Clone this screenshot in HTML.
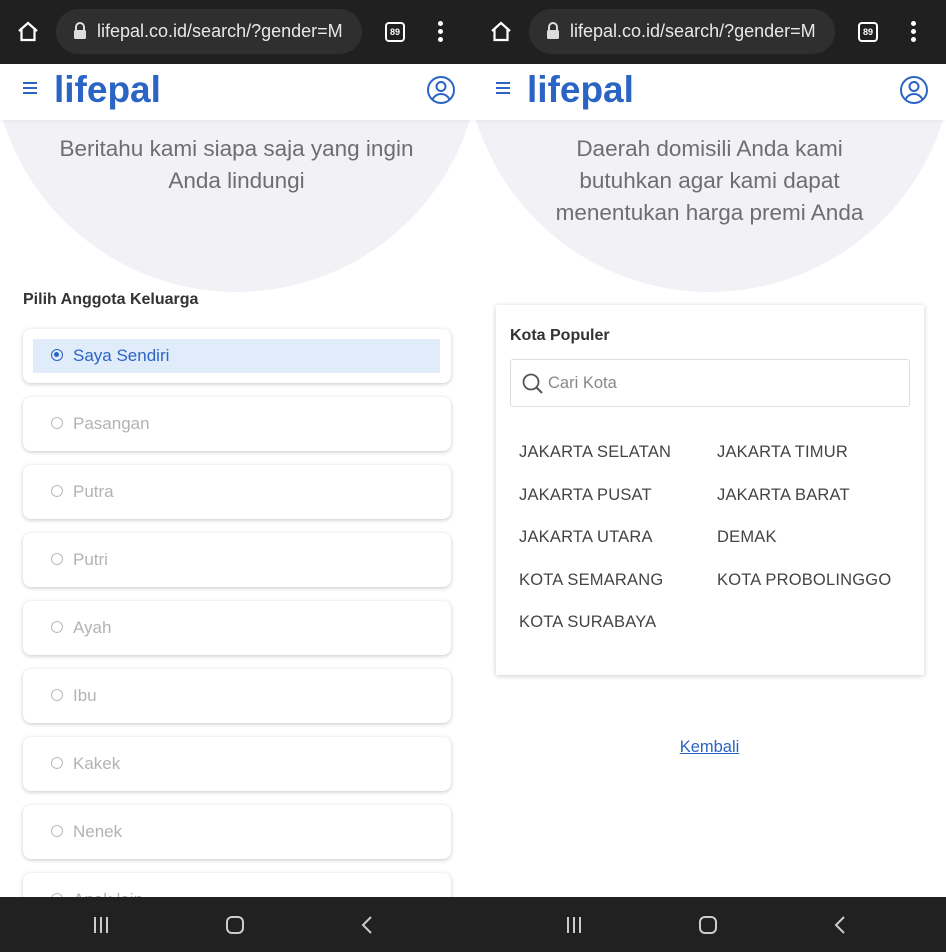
<!DOCTYPE html>
<html><head><meta charset="utf-8"><style>
*{margin:0;padding:0;box-sizing:border-box}
body{width:946px;height:952px;overflow:hidden;background:#fff;font-family:"Liberation Sans",sans-serif;position:relative}
.p{position:absolute;top:0;width:473px;height:952px;overflow:hidden;background:#fff}
.sb{position:absolute;top:0;left:0;width:473px;height:64px;background:#202020}
.url{position:absolute;left:56px;top:9px;width:306px;height:45px;border-radius:23px;background:#2f2f2f;color:#e8e8e8;font-size:18px;line-height:45px;padding-left:41px;white-space:nowrap;overflow:hidden}
.hdr{position:absolute;top:64px;left:0;width:473px;height:56px;background:#fff;z-index:2;box-shadow:0 2px 3px rgba(0,0,0,.04)}
.logo{position:absolute;left:54px;top:5px;font-size:37px;color:#2a64c5;font-weight:bold;letter-spacing:0px}
.circ{position:absolute;left:-8px;top:-197px;width:489px;height:489px;border-radius:50%;background:#f2f2f6}
.t{position:absolute;left:0;width:473px;text-align:center;color:#6e6e6e;font-size:22.5px;line-height:32px;z-index:1}
.card{position:absolute;left:23px;width:428px;height:54px;border-radius:8px;background:#fff;box-shadow:0 1px 4px rgba(0,0,0,.22);color:#b3b3b3;font-size:17px}
.card span{position:absolute;left:50px;top:17px}
.card i{position:absolute;left:28px;top:20px;width:12px;height:12px;border:1.5px solid #bbb;border-radius:50%}
.nav{position:absolute;left:0;top:897px;width:473px;height:55px;background:#212121;z-index:3}
.c{position:absolute;font-size:16.5px;color:#444;letter-spacing:.2px}
</style></head><body>

<div class="p" style="left:0">
<div class="circ"></div>
<div class="sb">
<svg style="position:absolute;left:16px;top:20px" width="24" height="24" viewBox="0 0 24 24"><path d="M3 11L12 3l9 8M5.5 9v11h13V9" fill="none" stroke="#fff" stroke-width="2.2"/></svg>
<div class="url">lifepal.co.id/search/?gender=M</div>
<svg style="position:absolute;left:72px;top:22px" width="16" height="18" viewBox="0 0 16 18"><path d="M4 8V5a4 4 0 018 0v3" fill="none" stroke="#ddd" stroke-width="2"/><rect x="2" y="8" width="12" height="9" rx="1.5" fill="#ddd"/></svg>
<div style="position:absolute;left:385px;top:22px;width:20px;height:20px;border:2px solid #fff;border-radius:4px;color:#fff;font-size:9px;font-weight:bold;text-align:center;line-height:16px">89</div>
<div style="position:absolute;left:438px;top:21px;width:5px;height:5px;border-radius:50%;background:#fff;box-shadow:0 8px #fff,0 16px #fff"></div>
</div>
<div class="hdr">
<div style="position:absolute;left:23px;top:18px;width:14px;height:1.5px;background:#2a64c5;box-shadow:0 5px #2a64c5,0 10px #2a64c5"></div>
<div class="logo">lifepal</div>
<svg style="position:absolute;left:426px;top:11px" width="30" height="30" viewBox="0 0 30 30"><circle cx="15" cy="15" r="13" fill="none" stroke="#2a64c5" stroke-width="2"/><circle cx="15" cy="11.5" r="4.5" fill="none" stroke="#2a64c5" stroke-width="2"/><path d="M6.5 24.5c2-4 5-5.5 8.5-5.5s6.5 1.5 8.5 5.5" fill="none" stroke="#2a64c5" stroke-width="2"/></svg>
</div>
<div class="t" style="top:133px">Beritahu kami siapa saja yang ingin<br>Anda lindungi</div>
<div style="position:absolute;left:23px;top:291px;font-size:16px;font-weight:bold;color:#333">Pilih Anggota Keluarga</div>
<div class="card" style="top:329px"><div style="position:absolute;left:10px;top:10px;width:407px;height:34px;background:#e1ecfb"></div><i style="border-color:#2a64c5;z-index:1"><b style="position:absolute;left:2px;top:2px;width:5px;height:5px;border-radius:50%;background:#2a64c5"></b></i><span style="color:#2a64c5;z-index:1">Saya Sendiri</span></div>
<div class="card" style="top:397px"><i></i><span>Pasangan</span></div>
<div class="card" style="top:465px"><i></i><span>Putra</span></div>
<div class="card" style="top:533px"><i></i><span>Putri</span></div>
<div class="card" style="top:601px"><i></i><span>Ayah</span></div>
<div class="card" style="top:669px"><i></i><span>Ibu</span></div>
<div class="card" style="top:737px"><i></i><span>Kakek</span></div>
<div class="card" style="top:805px"><i></i><span>Nenek</span></div>
<div class="card" style="top:873px"><i></i><span>Anak lain</span></div>
<div class="nav">
<div style="position:absolute;left:94px;top:20px;width:2px;height:16px;background:#ccc;box-shadow:6px 0 #ccc,12px 0 #ccc"></div>
<div style="position:absolute;left:226px;top:19px;width:18px;height:18px;border:2px solid #ccc;border-radius:6px"></div>
<svg style="position:absolute;left:360px;top:18px" width="14" height="20"><path d="M11 2L3 10l8 8" fill="none" stroke="#ccc" stroke-width="2"/></svg>
</div>
</div>

<div class="p" style="left:473px">
<div class="circ"></div>
<div class="sb">
<svg style="position:absolute;left:16px;top:20px" width="24" height="24" viewBox="0 0 24 24"><path d="M3 11L12 3l9 8M5.5 9v11h13V9" fill="none" stroke="#fff" stroke-width="2.2"/></svg>
<div class="url">lifepal.co.id/search/?gender=M</div>
<svg style="position:absolute;left:72px;top:22px" width="16" height="18" viewBox="0 0 16 18"><path d="M4 8V5a4 4 0 018 0v3" fill="none" stroke="#ddd" stroke-width="2"/><rect x="2" y="8" width="12" height="9" rx="1.5" fill="#ddd"/></svg>
<div style="position:absolute;left:385px;top:22px;width:20px;height:20px;border:2px solid #fff;border-radius:4px;color:#fff;font-size:9px;font-weight:bold;text-align:center;line-height:16px">89</div>
<div style="position:absolute;left:438px;top:21px;width:5px;height:5px;border-radius:50%;background:#fff;box-shadow:0 8px #fff,0 16px #fff"></div>
</div>
<div class="hdr">
<div style="position:absolute;left:23px;top:18px;width:14px;height:1.5px;background:#2a64c5;box-shadow:0 5px #2a64c5,0 10px #2a64c5"></div>
<div class="logo">lifepal</div>
<svg style="position:absolute;left:426px;top:11px" width="30" height="30" viewBox="0 0 30 30"><circle cx="15" cy="15" r="13" fill="none" stroke="#2a64c5" stroke-width="2"/><circle cx="15" cy="11.5" r="4.5" fill="none" stroke="#2a64c5" stroke-width="2"/><path d="M6.5 24.5c2-4 5-5.5 8.5-5.5s6.5 1.5 8.5 5.5" fill="none" stroke="#2a64c5" stroke-width="2"/></svg>
</div>
<div class="t" style="top:133px">Daerah domisili Anda kami<br>butuhkan agar kami dapat<br>menentukan harga premi Anda</div>
<div style="position:absolute;left:23px;top:305px;width:428px;height:370px;background:#fff;box-shadow:0 1px 5px rgba(0,0,0,.2)">
<div style="position:absolute;left:14px;top:22px;font-size:16px;font-weight:bold;color:#333">Kota Populer</div>
<div style="position:absolute;left:14px;top:54px;width:400px;height:48px;border:1px solid #ddd;border-radius:3px">
<svg style="position:absolute;left:10px;top:12px" width="24" height="24" viewBox="0 0 24 24"><circle cx="10" cy="10" r="7.5" fill="none" stroke="#555" stroke-width="1.8"/><path d="M15.5 15.5L21 21" stroke="#555" stroke-width="2"/></svg>
<div style="position:absolute;left:37px;top:14px;font-size:16.5px;color:#888">Cari Kota</div>
</div>
</div>
<div class="c" style="left:46px;top:443px">JAKARTA SELATAN</div>
<div class="c" style="left:244px;top:443px">JAKARTA TIMUR</div>
<div class="c" style="left:46px;top:486px">JAKARTA PUSAT</div>
<div class="c" style="left:244px;top:486px">JAKARTA BARAT</div>
<div class="c" style="left:46px;top:528px">JAKARTA UTARA</div>
<div class="c" style="left:244px;top:528px">DEMAK</div>
<div class="c" style="left:46px;top:571px">KOTA SEMARANG</div>
<div class="c" style="left:244px;top:571px">KOTA PROBOLINGGO</div>
<div class="c" style="left:46px;top:613px">KOTA SURABAYA</div>
<div style="position:absolute;left:0;width:473px;top:738px;text-align:center;font-size:16.5px;color:#2a64c5;text-decoration:underline">Kembali</div>
<div class="nav">
<div style="position:absolute;left:94px;top:20px;width:2px;height:16px;background:#ccc;box-shadow:6px 0 #ccc,12px 0 #ccc"></div>
<div style="position:absolute;left:226px;top:19px;width:18px;height:18px;border:2px solid #ccc;border-radius:6px"></div>
<svg style="position:absolute;left:360px;top:18px" width="14" height="20"><path d="M11 2L3 10l8 8" fill="none" stroke="#ccc" stroke-width="2"/></svg>
</div>
</div>
</body></html>
